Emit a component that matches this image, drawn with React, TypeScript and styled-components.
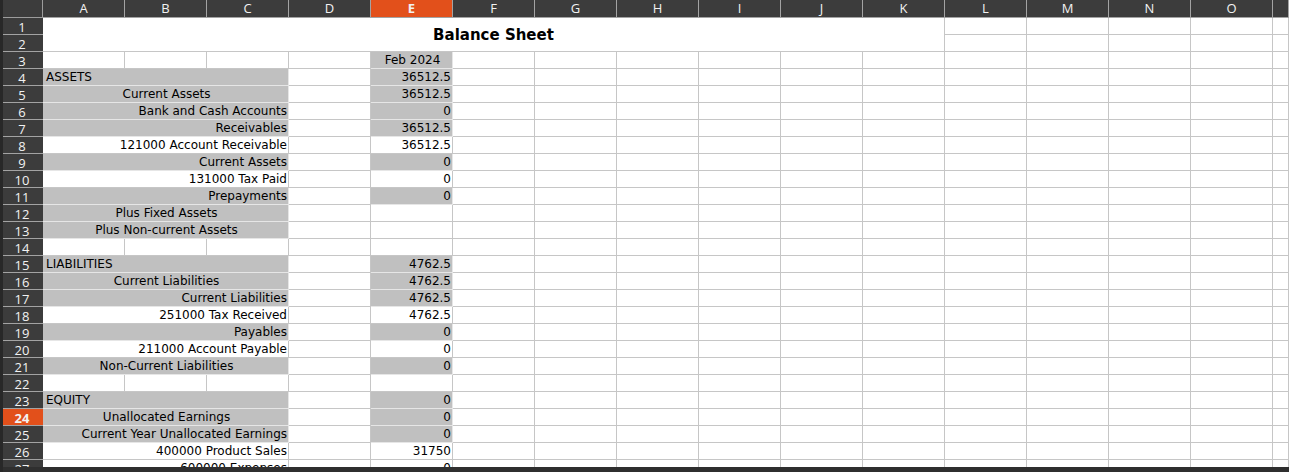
import styled, { createGlobalStyle } from "styled-components";

const GlobalStyle = createGlobalStyle`
    html, body {
        margin: 0;
        padding: 0;
        background: #ffffff;
        overflow: hidden;
    }
`;

const COLUMNS = ["A", "B", "C", "D", "E", "F", "G", "H", "I", "J", "K", "L", "M", "N", "O", "P"];
const ACTIVE_COL = "E";
const ACTIVE_ROW = 24;
const LAST_ROW = 27;

type Align = "left" | "center" | "right";

interface SheetRow {
	label?: string;
	align?: Align;
	labelFill?: boolean;
	value?: string;
	valueFill?: boolean;
	valueAlign?: Align;
	split?: boolean;
}

const rows: Record<number, SheetRow> = {
	3: { split: true, value: "Feb 2024", valueFill: true, valueAlign: "center" },
	4: { label: "ASSETS", align: "left", labelFill: true, value: "36512.5", valueFill: true },
	5: { label: "Current Assets", align: "center", labelFill: true, value: "36512.5", valueFill: true },
	6: { label: "Bank and Cash Accounts", align: "right", labelFill: true, value: "0", valueFill: true },
	7: { label: "Receivables", align: "right", labelFill: true, value: "36512.5", valueFill: true },
	8: { label: "121000 Account Receivable", align: "right", value: "36512.5" },
	9: { label: "Current Assets", align: "right", labelFill: true, value: "0", valueFill: true },
	10: { label: "131000 Tax Paid", align: "right", value: "0" },
	11: { label: "Prepayments", align: "right", labelFill: true, value: "0", valueFill: true },
	12: { label: "Plus Fixed Assets", align: "center", labelFill: true },
	13: { label: "Plus Non-current Assets", align: "center", labelFill: true },
	14: { split: true },
	15: { label: "LIABILITIES", align: "left", labelFill: true, value: "4762.5", valueFill: true },
	16: { label: "Current Liabilities", align: "center", labelFill: true, value: "4762.5", valueFill: true },
	17: { label: "Current Liabilities", align: "right", labelFill: true, value: "4762.5", valueFill: true },
	18: { label: "251000 Tax Received", align: "right", value: "4762.5" },
	19: { label: "Payables", align: "right", labelFill: true, value: "0", valueFill: true },
	20: { label: "211000 Account Payable", align: "right", value: "0" },
	21: { label: "Non-Current Liabilities", align: "center", labelFill: true, value: "0", valueFill: true },
	22: { split: true },
	23: { label: "EQUITY", align: "left", labelFill: true, value: "0", valueFill: true },
	24: { label: "Unallocated Earnings", align: "center", labelFill: true, value: "0", valueFill: true },
	25: { label: "Current Year Unallocated Earnings", align: "right", labelFill: true, value: "0", valueFill: true },
	26: { label: "400000 Product Sales", align: "right", value: "31750" },
	27: { label: "600000 Expenses", align: "right", value: "0" },
};

const Window = styled.div`
    width: 1289px;
    height: 472px;
    display: flex;
    flex-direction: column;
    background: #2f2f2f;
    border-left: 3px solid #282828;
    box-sizing: border-box;
`;

const Viewport = styled.div`
    height: 467px;
    overflow: hidden;
    background: #ffffff;
`;

const Grid = styled.div`
    display: grid;
    grid-template-columns: 40px repeat(15, 82px) 1fr;
    grid-template-rows: 18px repeat(${LAST_ROW}, 17px);
`;

const Corner = styled.div`
    background: #3c3c3c;
    border-bottom: 1px solid #9c9c9c;
    border-right: 1px solid #9c9c9c;
    box-sizing: border-box;
`;

const ColHead = styled.div<{ $active?: boolean }>`
    background: ${(p) => (p.$active ? "#e2501b" : "#3c3c3c")};
    color: #f2f2f2;
    font-family: "Open Sans", "DejaVu Sans", sans-serif;
    font-size: 13px;
    font-weight: ${(p) => (p.$active ? 700 : 400)};
    display: flex;
    align-items: center;
    justify-content: center;
    border-right: 1px solid #a3a3a3;
    border-bottom: 1px solid #a3a3a3;
    box-sizing: border-box;
    line-height: 17px;
`;

const RowHead = styled.div<{ $active?: boolean }>`
    background: ${(p) => (p.$active ? "#e2501b" : "#3c3c3c")};
    color: #f2f2f2;
    font-family: "Open Sans", "DejaVu Sans", sans-serif;
    font-size: 13px;
    font-weight: ${(p) => (p.$active ? 700 : 400)};
    display: flex;
    align-items: center;
    justify-content: center;
    border-bottom: 1px solid #a3a3a3;
    box-sizing: border-box;
    line-height: 16px;
    padding: 1px 2px 0 0;
`;

const Cell = styled.div<{ $span?: number; $fill?: boolean; $align?: Align }>`
    grid-column: span ${(p) => p.$span ?? 1};
    background: ${(p) => (p.$fill ? "#c0c0c0" : "#ffffff")};
    border-right: 1px solid ${(p) => (p.$fill ? "#e6e6e6" : "#c6c6c6")};
    border-bottom: 1px solid ${(p) => (p.$fill ? "#e6e6e6" : "#c6c6c6")};
    box-sizing: border-box;
    color: #000000;
    font-family: "DejaVu Sans", "Liberation Sans", sans-serif;
    font-size: 12px;
    line-height: 15px;
    padding: 1px 1px 0 3px;
    text-align: ${(p) => p.$align ?? "right"};
    white-space: nowrap;
    overflow: hidden;
`;

const TitleCell = styled.div`
    grid-column: span 11;
    grid-row: span 2;
    display: flex;
    align-items: center;
    justify-content: center;
    border-right: 1px solid #c6c6c6;
    border-bottom: 1px solid #c6c6c6;
    box-sizing: border-box;
    font-family: "DejaVu Sans", "Liberation Sans", sans-serif;
    font-size: 15px;
    font-weight: 700;
    color: #000000;
    padding-top: 1px;
`;

const BottomBar = styled.div`
    flex: 1;
    background: #2f2f2f;
`;

function EmptyCells({ count }: { count: number }) {
	return (
		<>
			{Array.from({ length: count }, (_, i) => (
				<Cell key={i} />
			))}
		</>
	);
}

function DataRow({ n }: { n: number }) {
	const r = rows[n] ?? { split: true };
	return (
		<>
			<RowHead $active={n === ACTIVE_ROW}>{n}</RowHead>
			{r.split ? (
				<EmptyCells count={3} />
			) : (
				<Cell $span={3} $fill={r.labelFill} $align={r.align}>
					{r.label}
				</Cell>
			)}
			<Cell />
			<Cell $fill={r.valueFill} $align={r.valueAlign}>
				{r.value}
			</Cell>
			<EmptyCells count={11} />
		</>
	);
}

export default function App() {
	const rowNumbers = Array.from({ length: LAST_ROW - 2 }, (_, i) => i + 3);
	return (
		<>
			<GlobalStyle />
			<Window>
				<Viewport>
					<Grid>
						<Corner />
						{COLUMNS.map((c) => (
							<ColHead key={c} $active={c === ACTIVE_COL}>
								{c === "P" ? "" : c}
							</ColHead>
						))}

						<RowHead>1</RowHead>
						<TitleCell>Balance Sheet</TitleCell>
						<EmptyCells count={5} />
						<RowHead>2</RowHead>
						<EmptyCells count={5} />

						{rowNumbers.map((n) => (
							<DataRow key={n} n={n} />
						))}
					</Grid>
				</Viewport>
				<BottomBar />
			</Window>
		</>
	);
}
